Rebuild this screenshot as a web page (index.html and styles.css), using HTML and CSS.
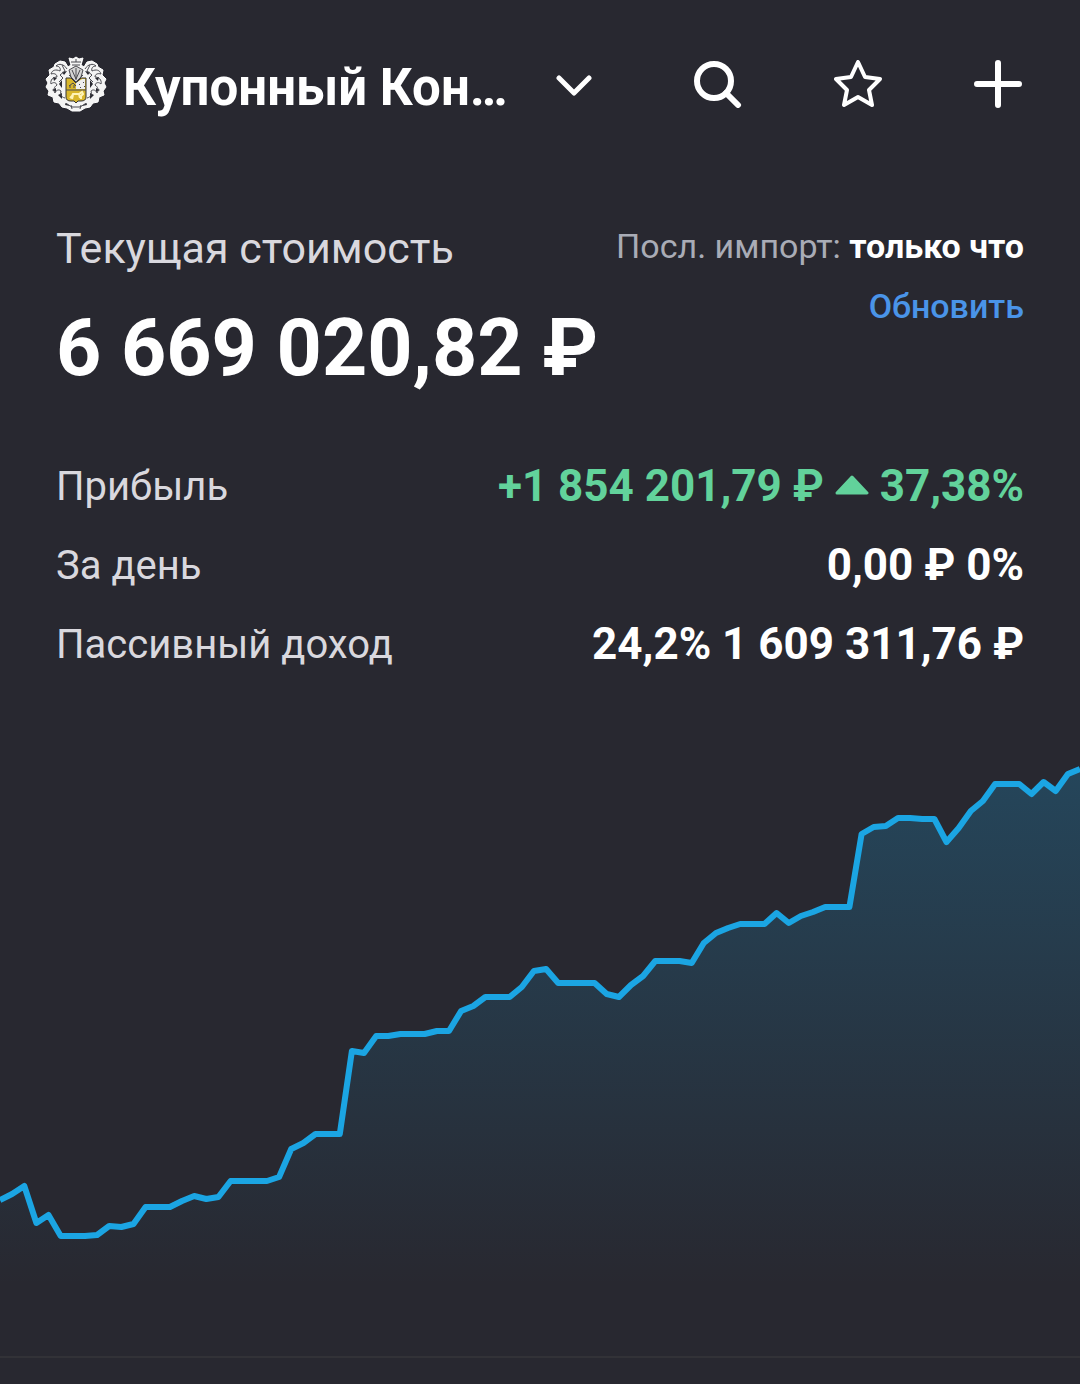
FILE: index.html
```html
<!DOCTYPE html>
<html lang="ru">
<head>
  <meta charset="UTF-8">
  <meta name="viewport" content="width=device-width, initial-scale=1">
  <title>Купонный Кон…</title>
  <link rel="stylesheet" href="styles.css">
</head>
<body>

<!-- Header -->
<header class="topbar">
  <button class="portfolio-btn" type="button">
    <svg class="crest" viewBox="0 0 62 56" aria-hidden="true">
      <path class="crest-base" d="M24 2l4 1 3-2 3 2 4-1-2 7 3 2 3-5 5-1 5 3 1 3 5 3-1 5 4 4-2 4 2 4-3 4 1 4-5 2-1 5-5 1-3 4-5 1-5 3h-8l-5-3-5-1-3-4-5-1-1-5-5-2 1-4-3-4 2-4-2-4 4-4-1-5 5-3 1-3 5-3 5 1 3 5 3-2z"/>
      <path class="crest-gap" d="M22 15l-3 4-2-3zM40 15l3 4 2-3zM17 24l-3 4 3 4zM45 24l3 4-3 4zM17 37l-4 2 4 4zM45 37l4 2-4 4zM8 21l4 1-3 3zM54 21l-4 1 3 3zM7 34l4-2v4zM55 34l-4-2v4zM21 47l4 3-5-1zM41 47l-4 3 5-1z"/>
      <path class="crest-lines" d="M26 6h10M27 9h8M31 3v3M22 13c-3-5-8-6-11-3 3 0 5 2 4 5-4-2-8-1-9 3 3-1 6 0 6 3-4 0-7 3-6 7 2-2 5-2 6 1-3 2-4 5-2 8 1-3 4-4 6-2-1 3 0 6 4 7M40 13c3-5 8-6 11-3-3 0-5 2-4 5 4-2 8-1 9 3-3-1-6 0-6 3 4 0 7 3 6 7-2-2-5-2-6 1 3 2 4 5 2 8-1-3-4-4-6-2 1 3 0 6-4 7M17 9l3 6-5 4 3 3-4 4M45 9l-3 6 5 4-3 3 4 4M20 48c3-1 5 3 8 3h6c3 0 5-4 8-3M26 49l1 4M36 49l-1 4"/>
      <path class="crest-helm" d="M24 14l7-4 7 4-2 7-5 5-5-5z"/>
      <path class="crest-lines" d="M27 14l4 9 4-9M31 12v12M24 19l4 4M38 19l-4 4"/>
      <path class="crest-gold" d="M21 22h5l5 5 5-5h5v19q0 4-5 4h-3l-2 2-2-2h-3q-5 0-5-4z"/>
      <path class="crest-white" d="M37 23h3v10h-9v-6z"/>
      <path class="crest-lines" d="M21 34h20M24 30l4-3 3 3M25 32v-3M29 32v-3M34 28l1 1M38 26l1 1M35 31l1 1M39 30l1 1"/>
      <path class="crest-horse" d="M25 42l2-2 1-2h6l3-2 1 2-2 2v3M28 39l-1 4M34 38l1 4"/>
    </svg>
    <span class="portfolio-name">Купонный Кон…</span>
    <svg class="chevron" viewBox="0 0 36 22" aria-hidden="true"><path d="M3 3l15 15L33 3"/></svg>
  </button>
  <nav class="actions">
    <button class="icon-btn" type="button" aria-label="Поиск">
      <svg viewBox="0 0 48 48" aria-hidden="true"><circle cx="20" cy="21" r="17"/><path d="M32 33l12 12"/></svg>
    </button>
    <button class="icon-btn star" type="button" aria-label="Избранное">
      <svg viewBox="0 0 48 48" aria-hidden="true"><path d="M24 2l7 15 15 2-11 11 3 15-14-8-14 8 3-15L2 19l15-2z"/></svg>
    </button>
    <button class="icon-btn" type="button" aria-label="Добавить">
      <svg viewBox="0 0 48 48" aria-hidden="true"><path d="M24 3v42M3 24h42"/></svg>
    </button>
  </nav>
</header>

<main>
  <!-- Portfolio value -->
  <section class="summary">
    <div class="value">
      <h1 class="value-label">Текущая стоимость</h1>
      <p class="value-total">6 669 020,82 ₽</p>
    </div>
    <div class="import">
      <p class="import-status">Посл. импорт: <strong>только что</strong></p>
      <a class="import-link" href="#">Обновить</a>
    </div>
  </section>

  <dl class="stats">
    <div class="stat">
      <dt>Прибыль</dt>
      <dd class="profit">+1 854 201,79 ₽
        <svg class="arrow-up" viewBox="0 0 34 20" aria-hidden="true"><path d="M17 2L32 18H2z"/></svg>
        37,38%</dd>
    </div>
    <div class="stat">
      <dt>За день</dt>
      <dd>0,00 ₽ 0%</dd>
    </div>
    <div class="stat">
      <dt>Пассивный доход</dt>
      <dd>24,2% 1 609 311,76 ₽</dd>
    </div>
  </dl>

  <!-- Value chart -->
  <svg class="chart" viewBox="0 0 1080 600" role="img" aria-label="График стоимости">
    <defs>
      <linearGradient id="fill" gradientUnits="userSpaceOnUse" x1="0" y1="10" x2="0" y2="530">
        <stop class="fill-top" offset="0"/>
        <stop class="fill-bottom" offset="1"/>
      </linearGradient>
    </defs>
    <path class="chart-area" id="chartArea"/>
    <polyline class="chart-line" id="chartLine"/>
  </svg>
</main>

<footer class="bottom"></footer>

<script>
// Chart points, top of the chart is 0
const points = [
  444, 438, 430, 467, 459, 480, 480, 480, 479, 470,
  471, 468, 451, 451, 451, 445, 440, 443, 441, 425,
  425, 425, 425, 421, 393, 387, 378, 378, 378, 295,
  297, 280, 280, 278, 278, 278, 275, 275, 255, 250,
  241, 241, 241, 231, 215, 213, 227, 227, 227, 227,
  238, 241, 229, 220, 205, 205, 205, 207, 187, 177,
  172, 168, 168, 168, 157, 167, 160, 156, 151, 151,
  151, 78, 71, 70, 62, 62, 63, 63, 86, 72,
  55, 45, 28, 28, 28, 38, 26, 35, 18, 13
];

const step = 1080 / (points.length - 1);
const line = points.map((y, i) => `${(i * step).toFixed(1)},${y}`).join(" ");
document.getElementById("chartLine").setAttribute("points", line);
document.getElementById("chartArea").setAttribute("d", `M${line} 1080,600 0,600Z`);
</script>

</body>
</html>
```
FILE: styles.css
```css
* { box-sizing: border-box; }
body {
  margin: 0;
  background: #282830;
  color: #fff;
  font-family: Roboto, sans-serif;
}
h1, p, dl, dd { margin: 0; }
svg { display: block; }
button {
  background: none;
  border: none;
  padding: 0;
  color: inherit;
  font: inherit;
  cursor: pointer;
}

.topbar {
  display: flex;
  align-items: center;
  justify-content: space-between;
  height: 168px;
  padding: 0 58px 0 45px;
}
.portfolio-btn { display: flex; align-items: center; }
.portfolio-name {
  margin: 8px 48px 0 16px;
  font-size: 51px;
  line-height: 60px;
  font-weight: 700;
  white-space: nowrap;
}
.crest { width: 62px; height: 56px; }
.crest path { stroke: #4a4a50; stroke-width: 1; fill: none; }
.crest .crest-base { fill: #f4f4f4; stroke: #fff; }
.crest .crest-gap { fill: #282830; stroke: none; }
.crest .crest-helm { fill: #d4d4d4; }
.crest .crest-gold { fill: #d8b62c; stroke: #333; }
.crest .crest-white { fill: #eee; stroke: none; }
.crest .crest-horse { stroke: #fff4b8; stroke-width: 2; }
.chevron { width: 36px; height: 22px; margin-top: 4px; }
.chevron path, .icon-btn svg {
  fill: none;
  stroke: #fff;
  stroke-width: 5;
  stroke-linecap: round;
  stroke-linejoin: round;
}
.actions { display: flex; gap: 92px; }
.icon-btn svg { width: 48px; height: 48px; }
.icon-btn circle, .icon-btn path { stroke-width: 6; }
.star path { stroke-width: 4; }

.summary {
  display: flex;
  justify-content: space-between;
  padding: 48px 56px 0;
}
.value-label {
  font-size: 43px;
  line-height: 64px;
  font-weight: 400;
  color: #d9d8de;
}
.value-total {
  margin-top: 16px;
  font-size: 79px;
  line-height: 104px;
  font-weight: 700;
}
.import {
  text-align: right;
  font-size: 34px;
  line-height: 60px;
}
.import-status { color: #a9acb6; }
.import-status strong { font-weight: 700; color: #fff; }
.import-link {
  color: #4a94e8;
  font-weight: 500;
  text-decoration: none;
}

.stats { padding: 47px 56px 0; }
.stat {
  display: flex;
  justify-content: space-between;
  line-height: 79px;
}
.stat dt { font-size: 40px; color: #d9d8de; }
.stat dd { font-size: 44px; font-weight: 700; }
.stat .profit { color: #62d29b; }
.arrow-up { display: inline-block; width: 34px; height: 20px; margin-bottom: 6px; }
.arrow-up path {
  fill: #62d29b;
  stroke: #62d29b;
  stroke-width: 3;
  stroke-linejoin: round;
}

.chart { width: 100%; margin-top: 72px; }
.fill-top { stop-color: #1ba5e3; stop-opacity: 0.24; }
.fill-bottom { stop-color: #1ba5e3; stop-opacity: 0; }
.chart-area { fill: url(#fill); }
.chart-line {
  fill: none;
  stroke: #1ba5e3;
  stroke-width: 6;
  stroke-linejoin: round;
}
.bottom { height: 28px; border-top: 2px solid #323237; }
```
